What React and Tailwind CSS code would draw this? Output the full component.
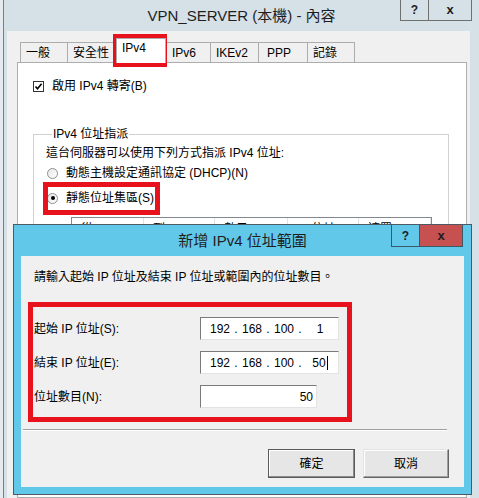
import React from 'react';

const tabs = [
  { label: '一般', w: 'w-[47px]' },
  { label: '安全性', w: 'w-[49px]' },
  { label: 'IPv4', w: 'w-[50px]', active: true },
  { label: 'IPv6', w: 'w-[44px]' },
  { label: 'IKEv2', w: 'w-[48px]' },
  { label: 'PPP', w: 'w-[49px]', pad: 'pl-[8px]' },
  { label: '記錄', w: 'w-[48px]' },
];

const columns = [
  { label: '從', w: 'w-[72px]' },
  { label: '到', w: 'w-[71px]' },
  { label: '數目', w: 'w-[73px]' },
  { label: 'IP 位址', w: 'w-[71px]' },
  { label: '遮罩', w: 'w-[72px]' },
];

function Radio({ checked }) {
  return (
    <span className="relative flex h-[11px] w-[11px] items-center justify-center rounded-full border border-[#8e8f8f] bg-gradient-to-br from-[#e6e6e6] to-white">
      {checked && <span className="h-[4px] w-[4px] rounded-full bg-black" />}
    </span>
  );
}

function IpField({ parts, caret }) {
  return (
    <div className="flex h-[23px] w-[139px] items-center border border-[#e3e3e3] border-t-[#7a7a7a] border-l-[#7a7a7a] bg-white pl-[6px]">
      <span className="w-[26px] text-center">{parts[0]}</span>
      <span className="w-[6px] text-center">.</span>
      <span className="w-[26px] text-center">{parts[1]}</span>
      <span className="w-[6px] text-center">.</span>
      <span className="w-[26px] text-center">{parts[2]}</span>
      <span className="w-[6px] text-center">.</span>
      <span className="flex w-[34px] items-center justify-center">
        {parts[3]}
        {caret && <span className="ml-[1px] h-[14px] w-px bg-black" />}
      </span>
    </div>
  );
}

export default function App() {
  return (
    <div className="relative h-[498px] w-[479px] overflow-hidden bg-[#e4eaee] font-['Liberation_Sans','Noto_Sans_CJK_TC',sans-serif] text-[12px] leading-[14px] text-black">

      {/* Background window */}
      <div className="ml-[3px] flex h-full flex-col border-l border-[#75808a] bg-[#d5e0e7]">

        {/* Title bar */}
        <div className="relative flex h-[31px] shrink-0 items-center justify-center text-[15px] leading-[18px] text-[#1e1e1e]">
          <span>VPN_SERVER (本機) - 內容</span>
          <div className="absolute right-[7px] top-0 flex h-[21px]">
            <div className="flex w-[28px] items-center justify-center border-b border-l border-[#6f6f6f] text-[12px] font-bold">?</div>
            <div className="flex w-[44px] items-center justify-center border-b border-l border-r border-[#6f6f6f] text-[13px] font-bold">x</div>
          </div>
        </div>

        {/* Content */}
        <div className="ml-[3px] mr-[9px] flex flex-1 flex-col bg-[#f0f0f0] pl-[10px] pr-[3px] pt-[7px]">

          {/* Tabs */}
          <div className="ml-[3px] flex h-[24px] items-end">
            {tabs.map((t, i) => (
              <div
                key={t.label}
                className={`${t.w} ${t.pad || 'pl-[5px]'} ${
                  t.active
                    ? 'relative z-10 -mb-px h-[25px] border-r bg-white pt-[2px]'
                    : 'flex h-[20px] items-center bg-[#f0f0f0]'
                } ${i === tabs.length - 1 ? 'border-r' : ''} border-l border-t border-[#adadad]`}
              >
                {t.label}
              </div>
            ))}
          </div>

          {/* Panel */}
          <div className="flex flex-1 flex-col border border-[#adadad] bg-white pl-[15px] pt-[16px]">
            <div className="flex h-[14px] items-center gap-[8px]">
              <span className="flex h-[11px] w-[11px] items-center justify-center border border-[#333] bg-white">
                <svg width="9" height="9" viewBox="0 0 9 9">
                  <path d="M1.5 4.5 L3.5 6.8 L7.6 1.8" fill="none" stroke="#000" strokeWidth="1.6" />
                </svg>
              </span>
              <span>啟用 IPv4 轉寄(B)</span>
            </div>

            <fieldset className="mt-[34px] h-[340px] w-[416px] border border-[#d0d0d0] pl-[12px]">
              <legend className="ml-[6px] px-[1px] leading-[14px]">IPv4 位址指派</legend>
              <div className="mt-[5px]">這台伺服器可以使用下列方式指派 IPv4 位址:</div>
              <div className="ml-[1px] mt-[6px] flex h-[14px] items-center gap-[8px]">
                <Radio />
                <span>動態主機設定通訊協定 (DHCP)(N)</span>
              </div>
              <div className="ml-[1px] mt-[11px] flex h-[14px] items-center gap-[8px]">
                <Radio checked />
                <span>靜態位址集區(S)</span>
              </div>
              <div className="ml-[25px] mt-[12px] flex h-[40px] w-[361px] border-l border-r border-t border-[#828790]">
                {columns.map((c) => (
                  <div key={c.label} className={`${c.w} h-[20px] border-r border-[#e2e2e2] pl-[9px] pt-[4px]`}>
                    {c.label}
                  </div>
                ))}
              </div>
            </fieldset>
          </div>
        </div>
      </div>

      {/* Annotation boxes on the background window */}
      <div className="absolute left-[113px] top-[34px] h-[33px] w-[54px] border-[5px] border-[#e8121c]" />
      <div className="absolute left-[43px] top-[182px] h-[33px] w-[117px] border-[5px] border-[#e8121c]" />

      {/* Modal dialog */}
      <div className="absolute left-[13px] top-[224px] flex h-[271px] w-[459px] flex-col border border-[#4d5a63] bg-[#62c8ea]">
        <div className="relative flex h-[31px] shrink-0 items-center justify-center text-[15px] leading-[18px] text-[#1e1e1e]">
          <span>新增 IPv4 位址範圍</span>
          <div className="absolute right-[8px] top-0 flex h-[22px]">
            <div className="flex w-[28px] items-center justify-center border-b border-l border-[#3a5866] text-[12px] font-bold">?</div>
            <div className="flex w-[44px] items-center justify-center border-b border-l border-r border-[#3a5866] bg-[#c75050] text-[13px] font-bold">x</div>
          </div>
        </div>

        <div className="mx-[7px] mb-[7px] flex flex-1 flex-col bg-[#f0f0f0]">
          <div className="pl-[13px] pt-[14px]">請輸入起始 IP 位址及結束 IP 位址或範圍內的位址數目。</div>

          <div className="ml-[7px] mt-[18px] flex w-[324px] flex-col gap-[11px] border-[5px] border-[#e8121c] pb-[9px] pt-[10px]">
            <div className="flex h-[23px] items-center pl-[1px]">
              <span className="w-[166px]">起始 IP 位址(S):</span>
              <IpField parts={['192', '168', '100', '1']} />
            </div>
            <div className="flex h-[23px] items-center pl-[1px]">
              <span className="w-[166px]">結束 IP 位址(E):</span>
              <IpField parts={['192', '168', '100', '50']} caret />
            </div>
            <div className="flex h-[23px] items-center pl-[1px]">
              <span className="w-[166px]">位址數目(N):</span>
              <div className="flex h-[23px] w-[117px] items-center justify-end border border-[#e3e3e3] border-t-[#7a7a7a] border-l-[#7a7a7a] bg-white pr-[3px]">
                50
              </div>
            </div>
          </div>

          <div className="ml-[2px] mt-[7px] w-[424px] border-b border-t border-b-white border-t-[#a0a0a0]" />

          <div className="mt-[18px] flex justify-end gap-[8px] pr-[15px]">
            <button className="flex h-[29px] w-[87px] items-center justify-center border border-[#5a5a5a] bg-[#e6e6e6] shadow-[inset_-1px_-1px_0_#8a8a8a,inset_1px_1px_0_#ffffff]">
              確定
            </button>
            <button className="flex h-[29px] w-[86px] items-center justify-center border border-[#646464] border-l-[#e3e3e3] border-t-[#e3e3e3] bg-[#e6e6e6] shadow-[inset_-1px_-1px_0_#a0a0a0,inset_1px_1px_0_#ffffff]">
              取消
            </button>
          </div>
        </div>
      </div>
    </div>
  );
}
